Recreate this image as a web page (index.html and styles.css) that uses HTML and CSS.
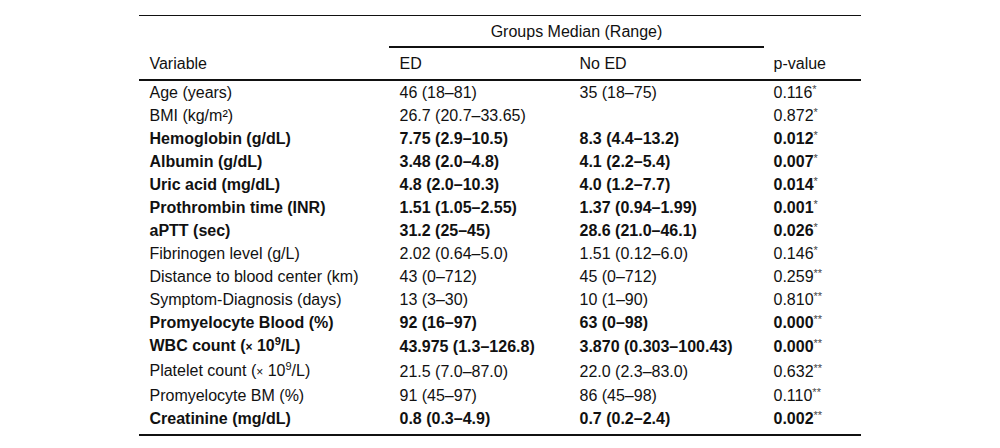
FILE: index.html
```html
<!DOCTYPE html>
<html lang="en">
<head>
<meta charset="utf-8">
<title>Groups Median (Range)</title>
<link rel="stylesheet" href="styles.css">
</head>
<body>
<table class="data">
  <colgroup>
    <col class="c-var">
    <col class="c-ed">
    <col class="c-noed">
    <col class="c-pv">
  </colgroup>
  <thead>
    <tr class="h1">
      <th class="var head-bottom" rowspan="2">Variable</th>
      <th class="group" colspan="2">Groups Median (Range)</th>
      <th class="pv head-bottom" rowspan="2">p-value</th>
    </tr>
    <tr class="h2">
      <th>ED</th>
      <th>No ED</th>
    </tr>
  </thead>
  <tbody>
    <tr><td>Age (years)</td><td>46 (18–81)</td><td>35 (18–75)</td><td>0.116<sup>*</sup></td></tr>
    <tr><td>BMI (kg/m²)</td><td>26.7 (20.7–33.65)</td><td></td><td>0.872<sup>*</sup></td></tr>
    <tr class="b"><td>Hemoglobin (g/dL)</td><td>7.75 (2.9–10.5)</td><td>8.3 (4.4–13.2)</td><td>0.012<sup>*</sup></td></tr>
    <tr class="b"><td>Albumin (g/dL)</td><td>3.48 (2.0–4.8)</td><td>4.1 (2.2–5.4)</td><td>0.007<sup>*</sup></td></tr>
    <tr class="b"><td>Uric acid (mg/dL)</td><td>4.8 (2.0–10.3)</td><td>4.0 (1.2–7.7)</td><td>0.014<sup>*</sup></td></tr>
    <tr class="b"><td>Prothrombin time (INR)</td><td>1.51 (1.05–2.55)</td><td>1.37 (0.94–1.99)</td><td>0.001<sup>*</sup></td></tr>
    <tr class="b"><td>aPTT (sec)</td><td>31.2 (25–45)</td><td>28.6 (21.0–46.1)</td><td>0.026<sup>*</sup></td></tr>
    <tr><td>Fibrinogen level (g/L)</td><td>2.02 (0.64–5.0)</td><td>1.51 (0.12–6.0)</td><td>0.146<sup>*</sup></td></tr>
    <tr><td>Distance to blood center (km)</td><td>43 (0–712)</td><td>45 (0–712)</td><td>0.259<sup>**</sup></td></tr>
    <tr><td>Symptom-Diagnosis (days)</td><td>13 (3–30)</td><td>10 (1–90)</td><td>0.810<sup>**</sup></td></tr>
    <tr class="b"><td>Promyelocyte Blood (%)</td><td>92 (16–97)</td><td>63 (0–98)</td><td>0.000<sup>**</sup></td></tr>
    <tr class="b"><td>WBC count (<span class="times">×</span> 10<sup class="exp">9</sup>/L)</td><td>43.975 (1.3–126.8)</td><td>3.870 (0.303–100.43)</td><td>0.000<sup>**</sup></td></tr>
    <tr><td>Platelet count (<span class="times">×</span> 10<sup class="exp">9</sup>/L)</td><td>21.5 (7.0–87.0)</td><td>22.0 (2.3–83.0)</td><td>0.632<sup>**</sup></td></tr>
    <tr><td>Promyelocyte BM (%)</td><td>91 (45–97)</td><td>86 (45–98)</td><td>0.110<sup>**</sup></td></tr>
    <tr class="b last"><td>Creatinine (mg/dL)</td><td>0.8 (0.3–4.9)</td><td>0.7 (0.2–2.4)</td><td>0.002<sup>**</sup></td></tr>
  </tbody>
</table>
</body>
</html>
```

FILE: styles.css
```css
html, body {
  margin: 0;
  padding: 0;
  background: #ffffff;
}

body {
  font-family: "Liberation Sans", Arial, sans-serif;
  font-size: 16px;
  color: #111111;
}

.data {
  width: 721px;
  margin: 15px auto 0;
  border-collapse: separate;
  border-spacing: 0;
  border-top: 1px solid #111111;
  table-layout: fixed;
}

.c-var { width: 250px; }
.c-ed { width: 180px; }
.c-noed { width: 194px; }
.c-pv { width: 97px; }

.data th,
.data td {
  padding: 0 0 0 10px;
  text-align: left;
  font-weight: normal;
  line-height: 23px;
  white-space: nowrap;
}

.h1 th.group {
  height: 30px;
  text-align: center;
  vertical-align: middle;
  padding: 0;
  border-bottom: 2px solid #111111;
}

.h2 th {
  height: 31px;
  vertical-align: middle;
  border-bottom: 2px solid #111111;
}

.data th.head-bottom {
  vertical-align: bottom;
  padding-bottom: 4px;
  border-bottom: 2px solid #111111;
}

.data tbody tr.b td {
  font-weight: bold;
}

.data tbody tr.last td {
  padding-bottom: 4px;
  border-bottom: 2px solid #111111;
}

.data sup {
  font-size: 11px;
  font-weight: normal;
  line-height: 0;
  vertical-align: 5px;
  color: #444444;
}

.data sup.exp {
  font-size: 11px;
  font-weight: inherit;
  color: inherit;
  vertical-align: 6px;
}

.times {
  font-size: 12px;
}
```
